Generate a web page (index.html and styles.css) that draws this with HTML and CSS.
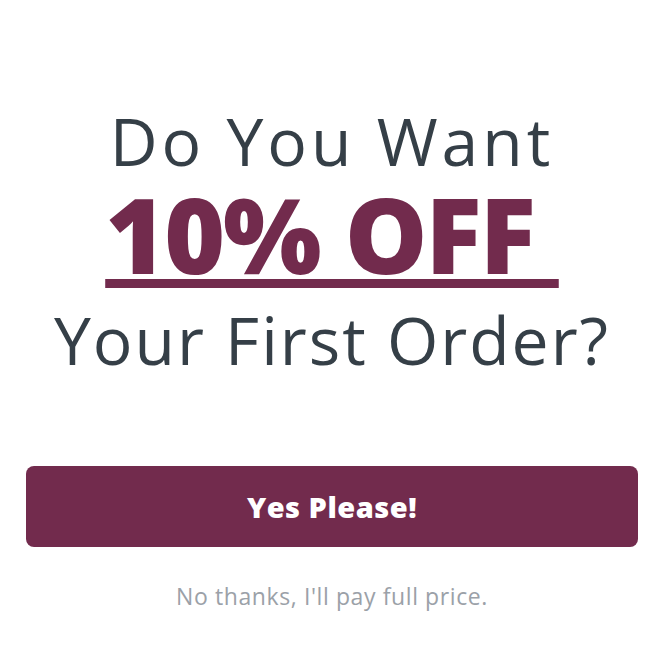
FILE: index.html
```html
<!DOCTYPE html>
<html lang="en">
<head>
  <meta charset="UTF-8">
  <title>10% Off Your First Order</title>
  <meta name="viewport" content="width=device-width, initial-scale=1.0">
  <link rel="stylesheet" href="styles.css">
</head>
<body>

  <div class="popup">
    <div class="headline">
      <div class="line-top">Do You Want</div>
      <div class="line-offer"><span>10% OFF&nbsp;</span></div>
      <div class="line-bottom">Your First Order?</div>
    </div>

    <button type="button" class="yes-btn">Yes Please!</button>
    <a href="#" class="no-link">No thanks, I'll pay full price.</a>
  </div>

</body>
</html>
```

FILE: styles.css
```css
body {
  font-family: 'Open Sans', 'Liberation Sans', sans-serif;
  background-color: #ffffff;
  margin: 0;
  padding: 0;
}

.popup {
  display: flex;
  flex-direction: column;
  align-items: center;
  padding: 100px 27px 0 26px;
}

.headline {
  display: flex;
  flex-direction: column;
  align-items: center;
  text-align: center;
}

.line-top,
.line-bottom {
  color: #353f47;
  font-size: 66px;
  font-weight: 400;
  line-height: 80px;
}

.line-top {
  letter-spacing: 4px;
}

.line-bottom {
  letter-spacing: 2px;
  margin-top: 11px;
}

.line-offer {
  color: #722b4d;
  font-size: 104px;
  font-weight: 800;
  line-height: 108px;
  letter-spacing: -2px;
}

.line-offer span {
  text-decoration: underline;
  text-decoration-thickness: 9px;
  text-underline-offset: 5px;
}

.yes-btn {
  width: 100%;
  height: 81px;
  margin-top: 87px;
  background-color: #722b4d;
  color: #ffffff;
  font-family: inherit;
  font-size: 29px;
  font-weight: 800;
  letter-spacing: 0.5px;
  border: none;
  border-radius: 8px;
  cursor: pointer;
}

.no-link {
  margin-top: 33px;
  color: #9ba1a8;
  font-size: 23px;
  letter-spacing: 0.6px;
  text-decoration: none;
}
```
